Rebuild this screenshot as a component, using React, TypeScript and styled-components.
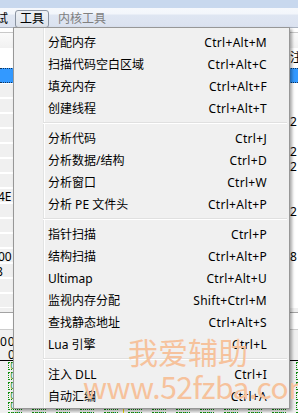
import React from "react";
import styled, { createGlobalStyle } from "styled-components";

const GlobalStyle = createGlobalStyle`
  html, body { margin: 0; padding: 0; }
  body { width: 298px; height: 413px; overflow: hidden; background: #f0f0f0; }
  #root { width: 298px; height: 413px; overflow: hidden; }
`;

const Page = styled.div`
  position: relative;
  width: 298px;
  height: 413px;
  overflow: hidden;
  display: flex;
  flex-direction: column;
  background: #f0f0f0;
  font-family: "Noto Sans", "Noto Sans CJK SC", sans-serif;
  font-size: 12px;
  color: #000;
`;

const TitleStrip = styled.div`
  flex: none;
  height: 8px;
  background: #c8d8ee;
`;

const MenuBar = styled.div`
  flex: none;
  height: 20px;
  box-sizing: border-box;
  padding-top: 2px;
  display: flex;
  gap: 2px;
  align-items: flex-start;
  border-bottom: 1px solid #aab2bf;
  background: linear-gradient(to bottom, #f6f8fc 0px, #f3f6fb 6px, #dfe6f2 7px, #dbe2f0 100%);
`;

const BarItem = styled.div<{ $active?: boolean; $dim?: boolean; $shift?: number }>`
  flex: none;
  height: 18px;
  box-sizing: border-box;
  padding: 0 4px;
  line-height: 16px;
  white-space: nowrap;
  border: 1px solid ${(p) => (p.$active ? "#8a93a1" : "transparent")};
  border-radius: 3px;
  background: ${(p) => (p.$active ? "linear-gradient(to bottom, #eef1f5, #dde2ea)" : "transparent")};
  color: ${(p) => (p.$dim ? "#808080" : "#000")};
  margin-left: ${(p) => p.$shift ?? 0}px;
`;

const ListTop = styled.div`
  flex: none;
  height: 20px;
  background: linear-gradient(to bottom, #ffffff 0 4px, #c9c9c9 4px 5px, #fbfbfb 5px, #f1f1f1 100%);
`;

const Grid = styled.div`
  display: grid;
  grid-template-columns: 13px 277px 1fr;
`;

const ListHeader = styled(Grid)`
  flex: none;
  height: 20px;
  line-height: 20px;
  background: #ffffff;
  white-space: nowrap;
  overflow: hidden;
`;

const DisasmRow = styled(Grid)<{ $selected?: boolean }>`
  flex: none;
  height: 15px;
  line-height: 15px;
  box-sizing: border-box;
  white-space: nowrap;
  overflow: hidden;
  background: ${(p) => (p.$selected ? "#3399ff" : "#ffffff")};
  border-top: 1px dotted ${(p) => (p.$selected ? "#12345a" : "transparent")};
  border-bottom: 1px dotted ${(p) => (p.$selected ? "#12345a" : "transparent")};
`;

const LeftCell = styled.div<{ $selected?: boolean; $shift?: number }>`
  overflow: hidden;
  background: ${(p) => (p.$selected ? "transparent" : "#f0f0f0")};
  text-indent: ${(p) => p.$shift ?? 0}px;
`;

const Cell = styled.div`
  overflow: hidden;
`;

const Splitter = styled.div`
  flex: none;
  height: 4px;
  background: #f0f0f0;
`;

const InputStrip = styled.div`
  flex: none;
  height: 18px;
  box-sizing: border-box;
  background: #ffffff;
  border-top: 1px solid #a3a3a3;
  border-bottom: 1px solid #cdcdcd;
`;

const HexHeader = styled.div`
  flex: none;
  display: flex;
  flex-direction: column;
  padding-top: 4px;
  border-bottom: 1px solid #000;
  white-space: nowrap;
`;

const HexHeadLine = styled.div<{ $h: number; $indent: number }>`
  height: ${(p) => p.$h}px;
  line-height: ${(p) => p.$h}px;
  padding-left: ${(p) => p.$indent}px;
  letter-spacing: 1px;
`;

const HexRows = styled.div`
  position: relative;
  flex: 1;
  display: flex;
  flex-direction: column;
  &::after {
    content: "";
    position: absolute;
    left: 123px;
    top: 0;
    bottom: 0;
    width: 1px;
    background: #e6d200;
  }
`;

const HexRow = styled.div`
  flex: none;
  height: 10px;
  display: flex;
  align-items: center;
  gap: 10px;
  padding-left: 8px;
`;

const Byte = styled.span`
  flex: none;
  width: 14px;
  height: 8px;
  box-sizing: border-box;
  border: 1px dotted #0a8a0a;
  color: #0a8a0a;
  font-size: 8px;
  line-height: 6px;
  text-align: center;
`;

const Menu = styled.div`
  position: absolute;
  left: 13px;
  top: 27px;
  width: 277px;
  height: 382px;
  box-sizing: border-box;
  border: 1px solid #979797;
  padding: 3px 2px 0 2px;
  display: flex;
  flex-direction: column;
  background:
    linear-gradient(to right, transparent 29px, #e2e3e3 29px, #e2e3e3 30px, #ffffff 30px, #ffffff 31px, transparent 31px),
    #f0f0f0;
  box-shadow: 2px 2px 3px rgba(0, 0, 0, 0.35);
  z-index: 2;
`;

const MenuRow = styled.div`
  flex: none;
  height: 22px;
  display: flex;
  align-items: center;
  padding: 0 20px 0 32px;
  white-space: nowrap;
`;

const Label = styled.span`
  flex: 1;
`;

const Shortcut = styled.span`
  flex: none;
  letter-spacing: 0.3px;
`;

const Separator = styled.div`
  flex: none;
  height: 8px;
  margin-left: 27px;
  display: flex;
  flex-direction: column;
  justify-content: center;
  &::before {
    content: "";
    display: block;
    height: 1px;
    background: #e0e0e0;
  }
  &::after {
    content: "";
    display: block;
    height: 1px;
    background: #ffffff;
  }
`;

const Watermark = styled.div`
  position: absolute;
  left: 83px;
  top: 336px;
  z-index: 3;
  display: flex;
  flex-direction: column;
  pointer-events: none;
  font-family: "Noto Sans CJK SC", sans-serif;
  color: #f6c29c;
  white-space: nowrap;
`;

const WmLine = styled.div<{ $indent: number; $gap: number; $spacing: number }>`
  font-size: 30px;
  line-height: 30px;
  margin-left: ${(p) => p.$indent}px;
  margin-top: ${(p) => p.$gap}px;
  letter-spacing: ${(p) => p.$spacing}px;
`;

const groups: [string, string][][] = [
  [
    ["分配内存", "Ctrl+Alt+M"],
    ["扫描代码空白区域", "Ctrl+Alt+C"],
    ["填充内存", "Ctrl+Alt+F"],
    ["创建线程", "Ctrl+Alt+T"],
  ],
  [
    ["分析代码", "Ctrl+J"],
    ["分析数据/结构", "Ctrl+D"],
    ["分析窗口", "Ctrl+W"],
    ["分析 PE 文件头", "Ctrl+Alt+P"],
  ],
  [
    ["指针扫描", "Ctrl+P"],
    ["结构扫描", "Ctrl+Alt+P"],
    ["Ultimap", "Ctrl+Alt+U"],
    ["监视内存分配", "Shift+Ctrl+M"],
    ["查找静态地址", "Ctrl+Alt+S"],
    ["Lua 引擎", "Ctrl+L"],
  ],
  [
    ["注入 DLL", "Ctrl+I"],
    ["自动汇编", "Ctrl+A"],
  ],
];

type Row = { left?: string; leftShift?: number; right?: string };
const rows: Row[] = [
  {},
  {},
  { right: "2" },
  {},
  { right: "2" },
  { right: "2" },
  {},
  { left: "4E", leftShift: -2 },
  { right: "2" },
  {},
  {},
  { left: "00", leftShift: -2, right: "8" },
  { left: "8", leftShift: -4 },
  {},
  {},
];

export default function App() {
  return (
    <>
      <GlobalStyle />
      <Page>
        <TitleStrip />
        <MenuBar>
          <BarItem $shift={-21}>调试</BarItem>
          <BarItem $active>工具</BarItem>
          <BarItem $dim $shift={2}>内核工具</BarItem>
        </MenuBar>
        <ListTop />
        <ListHeader>
          <Cell />
          <Cell />
          <Cell>注释</Cell>
        </ListHeader>
        <DisasmRow $selected>
          <LeftCell $selected />
          <Cell />
          <Cell />
        </DisasmRow>
        {rows.map((r, i) => (
          <DisasmRow key={i}>
            <LeftCell $shift={r.leftShift}>{r.left}</LeftCell>
            <Cell />
            <Cell>{r.right}</Cell>
          </DisasmRow>
        ))}
        <Splitter />
        <InputStrip />
        <HexHeader>
          <HexHeadLine $h={15} $indent={0}>00 01 02 03 04 05 06 07 08 09</HexHeadLine>
          <HexHeadLine $h={11} $indent={8}>0123456789ABCDEF</HexHeadLine>
        </HexHeader>
        <HexRows>
          {Array.from({ length: 6 }).map((_, i) => (
            <HexRow key={i}>
              {Array.from({ length: 13 }).map((__, j) => (
                <Byte key={j}>00</Byte>
              ))}
            </HexRow>
          ))}
        </HexRows>

        <Menu>
          {groups.map((g, gi) => (
            <React.Fragment key={gi}>
              {gi > 0 && <Separator />}
              {g.map(([label, sc]) => (
                <MenuRow key={label}>
                  <Label>{label}</Label>
                  <Shortcut>{sc}</Shortcut>
                </MenuRow>
              ))}
            </React.Fragment>
          ))}
        </Menu>

        <Watermark>
          <WmLine $indent={45} $gap={0} $spacing={0}>我爱辅助</WmLine>
          <WmLine $indent={0} $gap={5} $spacing={-0.5}>www.52fzba.com</WmLine>
        </Watermark>
      </Page>
    </>
  );
}
